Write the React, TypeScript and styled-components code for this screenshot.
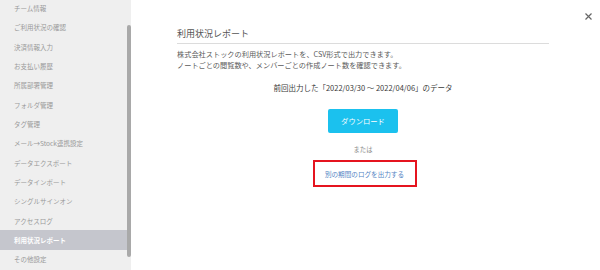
import React from "react";
import styled, { createGlobalStyle } from "styled-components";

const Global = createGlobalStyle`
  html, body { margin: 0; padding: 0; background: #fff; }
  body { font-family: "Noto Sans CJK JP", "Noto Sans", sans-serif; }
  #root { width: 600px; height: 270px; overflow: hidden; }
`;

const Page = styled.div`
  display: flex;
  width: 600px;
  height: 270px;
  overflow: hidden;
`;

const Sidebar = styled.nav`
  position: relative;
  width: 131px;
  flex: none;
  background: #efefef;
  overflow: hidden;
`;

const Menu = styled.ul`
  list-style: none;
  margin: -1.7px 0 0 0;
  padding: 0;
`;

const MenuItem = styled.li<{ $active?: boolean }>`
  height: 19.35px;
  display: flex;
  align-items: center;
  padding-left: 14px;
  font-size: 6.5px;
  color: ${(p) => (p.$active ? "#ffffff" : "#999999")};
  font-weight: ${(p) => (p.$active ? 700 : 400)};
  background: ${(p) => (p.$active ? "#c5c6cd" : "transparent")};
  white-space: nowrap;
`;

const Thumb = styled.div`
  position: absolute;
  right: 0;
  top: 25px;
  width: 4px;
  height: 232px;
  border-radius: 2px;
  background: #a9a9a9;
`;

const Main = styled.main`
  position: relative;
  flex: 1;
  padding: 28px 51px 0 46px;
  display: flex;
  flex-direction: column;
`;

const Close = styled.button`
  position: absolute;
  top: 8px;
  right: 8px;
  width: 7px;
  height: 7px;
  padding: 0;
  border: none;
  background: none;
  display: block;
`;

const Title = styled.h1`
  margin: 0;
  font-size: 9px;
  line-height: 12px;
  font-weight: 400;
  color: #555;
  padding-bottom: 3px;
  border-bottom: 1px solid #dcdcdc;
`;

const Desc = styled.p`
  margin: 5px 0 0;
  font-size: 7.2px;
  line-height: 11px;
  color: #5a5a5a;
`;

const Period = styled.p`
  margin: 12px 0 0;
  text-align: center;
  font-size: 7.5px;
  line-height: 10px;
  color: #3a3a3a;
`;

const Download = styled.button`
  align-self: center;
  margin-top: 16px;
  width: 70px;
  height: 24px;
  border: none;
  border-radius: 2px;
  background: #1bc1ee;
  color: #fff;
  font-family: inherit;
  font-size: 7.3px;
  padding: 0;
`;

const Or = styled.p`
  margin: 13px 0 0;
  text-align: center;
  font-size: 6.3px;
  line-height: 8px;
  color: #8a8a8a;
`;

const LinkBox = styled.div`
  align-self: center;
  margin-top: 6px;
  margin-left: 3px;
  width: 104px;
  height: 27px;
  box-sizing: border-box;
  border: 2px solid #e5141f;
  display: flex;
  align-items: center;
  justify-content: center;
`;

const OtherLink = styled.a`
  font-size: 6.6px;
  color: #5284c4;
  text-decoration: none;
`;

const items = [
  "チーム情報",
  "ご利用状況の確認",
  "決済情報入力",
  "お支払い履歴",
  "所属部署管理",
  "フォルダ管理",
  "タグ管理",
  "メール→Stock連携設定",
  "データエクスポート",
  "データインポート",
  "シングルサインオン",
  "アクセスログ",
  "利用状況レポート",
  "その他設定",
];

export default function App() {
  return (
    <>
      <Global />
      <Page>
        <Sidebar>
          <Menu>
            {items.map((t) => (
              <MenuItem key={t} $active={t === "利用状況レポート"}>
                {t}
              </MenuItem>
            ))}
          </Menu>
          <Thumb />
        </Sidebar>
        <Main>
          <Close aria-label="close">
            <svg width="7" height="7" viewBox="0 0 7 7">
              <path d="M0.5 0.5 L6.5 6.5 M6.5 0.5 L0.5 6.5" stroke="#666" strokeWidth="1.2" />
            </svg>
          </Close>
          <Title>利用状況レポート</Title>
          <Desc>
            株式会社ストックの利用状況レポートを、CSV形式で出力できます。
            <br />
            ノートごとの閲覧数や、メンバーごとの作成ノート数を確認できます。
          </Desc>
          <Period>前回出力した「2022/03/30 ～ 2022/04/06」のデータ</Period>
          <Download>ダウンロード</Download>
          <Or>または</Or>
          <LinkBox>
            <OtherLink href="#">別の期間のログを出力する</OtherLink>
          </LinkBox>
        </Main>
      </Page>
    </>
  );
}
